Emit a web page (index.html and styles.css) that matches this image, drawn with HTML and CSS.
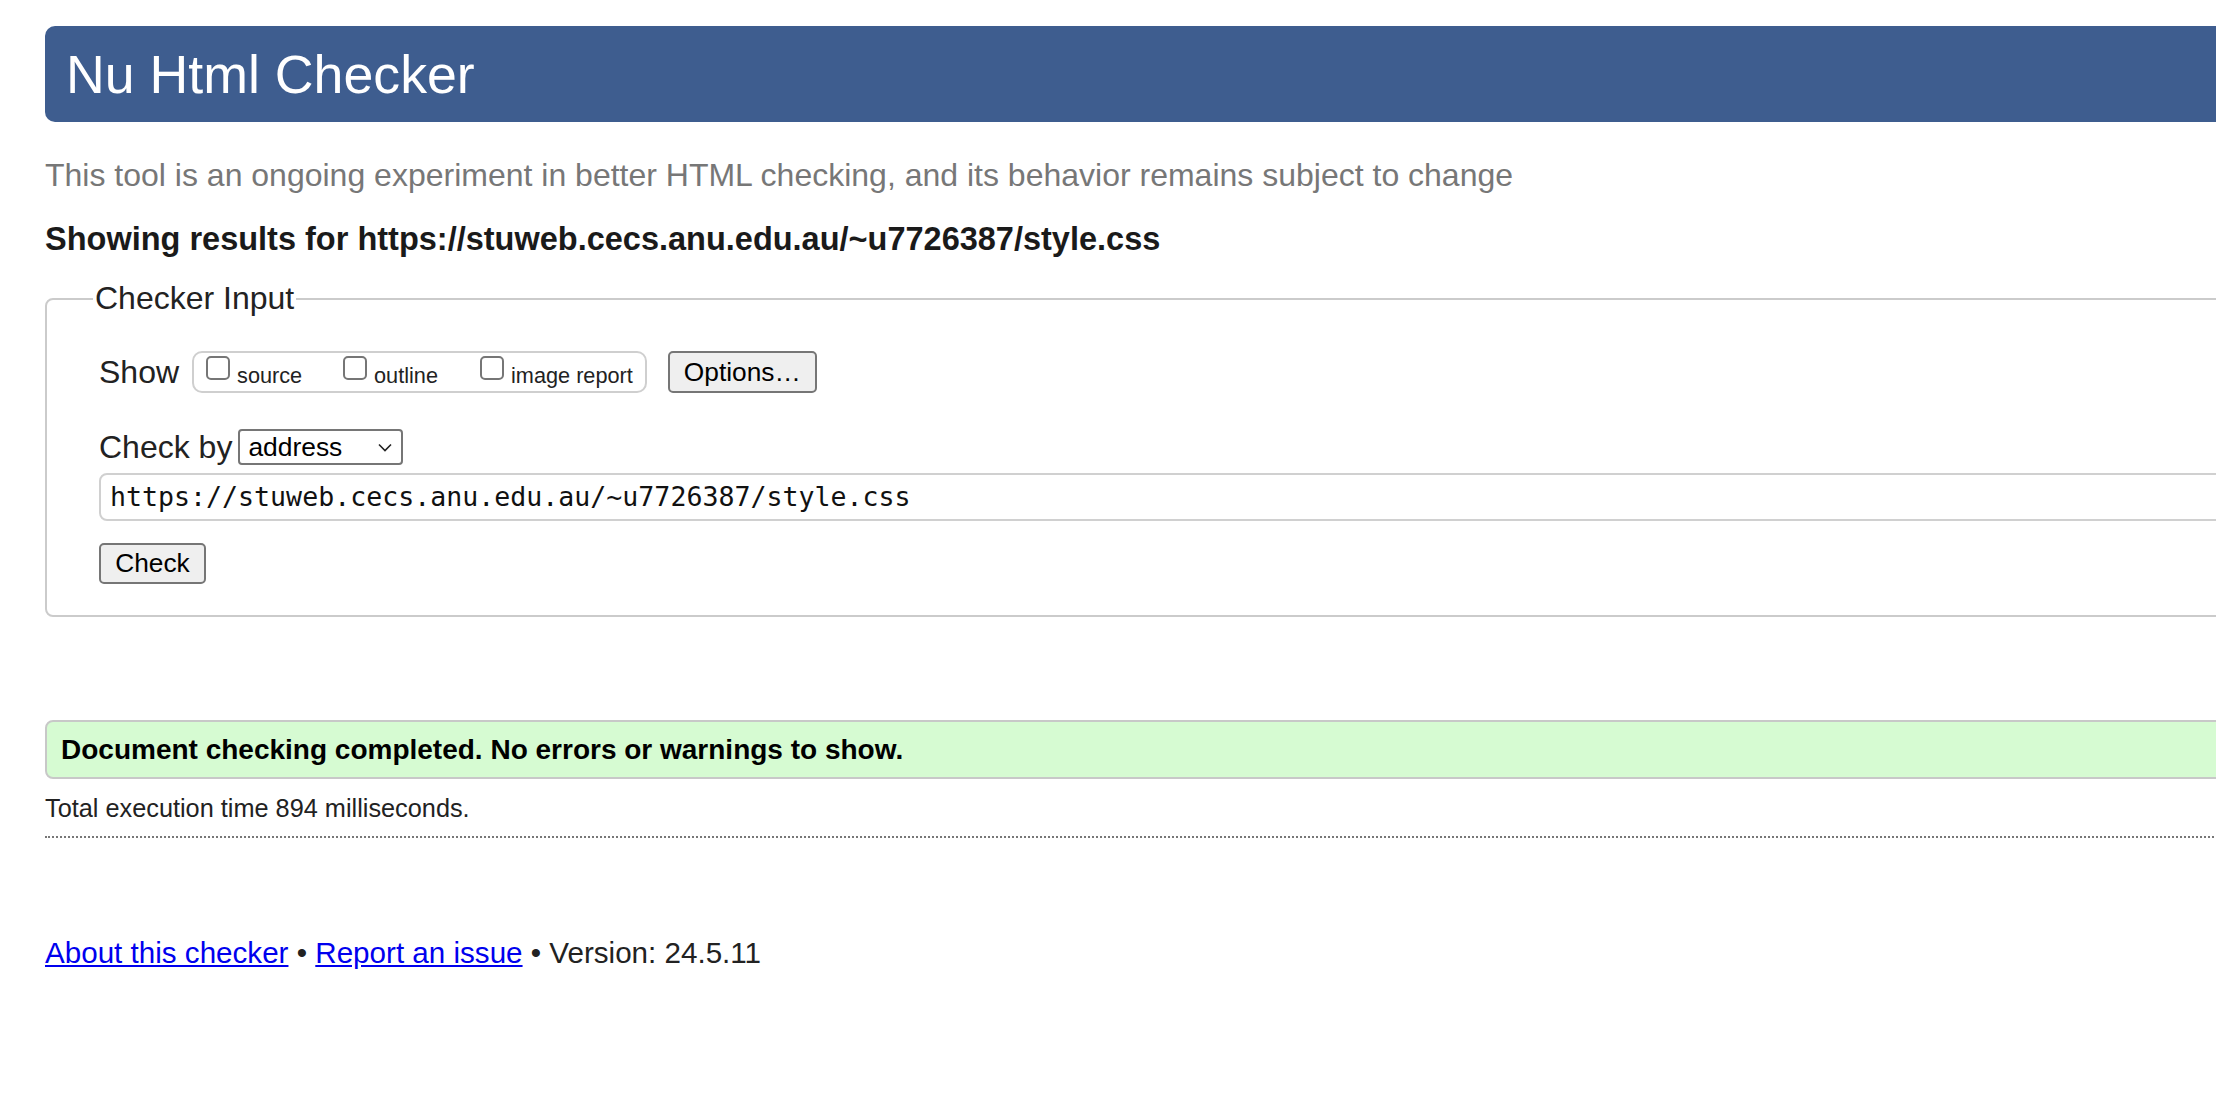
FILE: index.html
```html
<!DOCTYPE html>
<html lang="en">
<head>
<meta charset="utf-8">
<title>Nu Html Checker</title>
<link rel="stylesheet" href="styles.css">
</head>
<body>
<div class="page">
  <h1 class="banner">Nu Html Checker</h1>
  <p class="lede">This tool is an ongoing experiment in better HTML checking, and its behavior remains subject to change</p>
  <p class="results-for">Showing results for https://stuweb.cecs.anu.edu.au/~u7726387/style.css</p>
  <form class="checker">
    <fieldset class="input-box">
      <legend class="input-legend">Checker Input</legend>
      <div class="row show-row">
        <span class="label">Show</span>
        <span class="show-group">
          <label class="opt"><input type="checkbox" class="cb"><span class="opt-text">source</span></label>
          <label class="opt"><input type="checkbox" class="cb"><span class="opt-text">outline</span></label>
          <label class="opt last"><input type="checkbox" class="cb"><span class="opt-text">image report</span></label>
        </span>
        <button type="button" class="btn options-btn">Options…</button>
      </div>
      <div class="row by-row">
        <span class="label">Check by</span>
        <span class="select">address<svg class="chev" width="14" height="9" viewBox="0 0 14 9"><path d="M1 1.5 L7 7.5 L13 1.5" fill="none" stroke="#222" stroke-width="1.6"/></svg></span>
      </div>
      <div class="url-field">https://stuweb.cecs.anu.edu.au/~u7726387/style.css</div>
      <div class="row">
        <button type="button" class="btn check-btn">Check</button>
      </div>
    </fieldset>
  </form>
  <div class="success">Document checking completed. No errors or warnings to show.</div>
  <p class="stats">Total execution time 894 milliseconds.</p>
  <p class="footer"><a href="#">About this checker</a> • <a href="#">Report an issue</a> • Version: 24.5.11</p>
</div>
</body>
</html>
```

FILE: styles.css
```css
html, body {
  margin: 0;
  padding: 0;
  overflow: hidden;
  background: #ffffff;
}
body {
  font-family: "Liberation Sans", Arial, sans-serif;
  color: #222;
}
.page {
  width: 2220px;
  padding-left: 45px;
  padding-top: 26px;
}
.banner {
  margin: 0;
  height: 96px;
  line-height: 96px;
  font-size: 53.7px;
  font-weight: normal;
  color: #fff;
  background: #3e5d8f;
  border-radius: 10px;
  padding-left: 21px;
}
.lede {
  margin: 36px 0 0;
  font-size: 32px;
  line-height: 35px;
  color: #777;
}
.results-for {
  margin: 29px 0 0;
  font-size: 32.5px;
  line-height: 35px;
  font-weight: bold;
  color: #1a1a1a;
}
.checker {
  margin: 0;
}
.input-box {
  margin: 24px 0 0;
  border: 2px solid #cbcbcb;
  border-radius: 8px;
  padding: 0 0 31px 52px;
}
.input-legend {
  font-size: 32px;
  line-height: 35px;
  padding: 0 2px;
  margin-left: -6px;
  color: #222;
}
.row {
  display: flex;
  align-items: center;
}
.show-row {
  margin-top: 35px;
}
.label {
  font-size: 32px;
  line-height: 40px;
  margin-right: 8px;
}
.show-group {
  display: flex;
  align-items: flex-start;
  height: 38px;
  border: 2px solid #cfcfcf;
  border-radius: 10px;
  padding: 0 12px;
  margin-left: 5px;
}
.opt {
  display: flex;
  align-items: flex-start;
  width: 137px;
  font-size: 21.7px;
}
.opt.last {
  width: auto;
}
.cb {
  appearance: none;
  -webkit-appearance: none;
  width: 24px;
  height: 24px;
  margin: 3px 7px 0 0;
  border: 2px solid #767676;
  border-radius: 5px;
  background: #fff;
  box-sizing: border-box;
}
.opt-text {
  margin-top: 10px;
  line-height: 25px;
}
.btn {
  font-family: "Liberation Sans", Arial, sans-serif;
  font-size: 26.3px;
  color: #000;
  background: #efefef;
  border: 2px solid #767676;
  border-radius: 5px;
  padding: 0 14px;
  box-sizing: border-box;
}
.options-btn {
  height: 42px;
  margin-left: 21px;
}
.by-row {
  margin-top: 34px;
}
.by-row .label {
  margin-right: 6px;
}
.select {
  display: flex;
  align-items: center;
  justify-content: space-between;
  box-sizing: border-box;
  width: 165px;
  height: 36px;
  border: 2px solid #767676;
  border-radius: 4px;
  padding: 0 9px 0 8px;
  font-size: 26.4px;
  color: #000;
}
.url-field {
  margin-top: 6px;
  box-sizing: border-box;
  height: 48px;
  line-height: 44px;
  border: 2px solid #d0d0d0;
  border-radius: 8px;
  padding-left: 9px;
  font-family: "DejaVu Sans Mono", "Liberation Mono", monospace;
  font-size: 26.6px;
  color: #111;
}
.check-btn {
  margin-top: 22px;
  width: 107px;
  height: 41px;
}
.success {
  margin-top: 103px;
  box-sizing: border-box;
  height: 59px;
  line-height: 55px;
  border: 2px solid #c8c8c8;
  border-radius: 8px;
  background: #d6fbd2;
  padding-left: 14px;
  font-size: 28px;
  font-weight: bold;
  color: #000;
}
.stats {
  margin: 12px 0 0;
  font-size: 25.3px;
  line-height: 34px;
  padding-bottom: 11px;
  border-bottom: 2px dotted #777;
  color: #222;
}
.footer {
  margin: 98px 0 0;
  font-size: 29.6px;
  line-height: 34px;
  color: #222;
}
.footer a {
  color: #0000ee;
  text-decoration: underline;
}
```
